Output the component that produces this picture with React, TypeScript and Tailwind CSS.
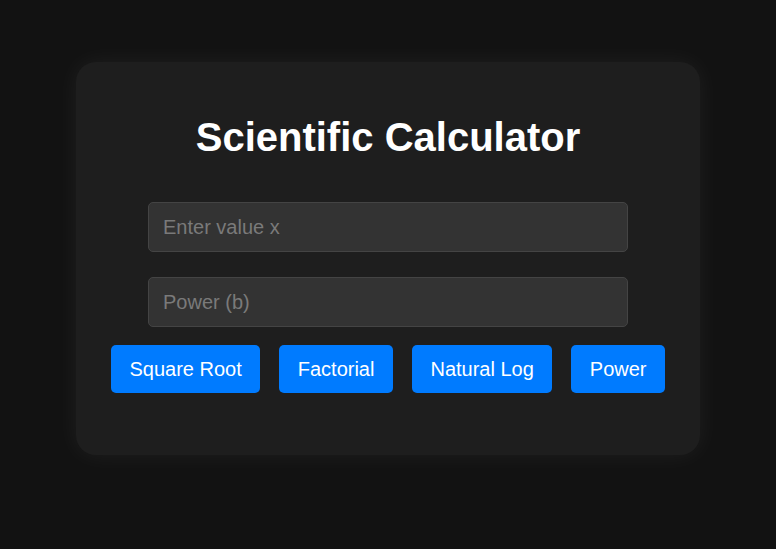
export default function App() {
  const ops = ['Square Root', 'Factorial', 'Natural Log', 'Power']

  return (
    <div className="min-h-[549px] bg-[#121212] flex justify-center pt-[62px] font-['Liberation_Sans',Arial,sans-serif]">
      <div className="w-[624px] h-[393px] bg-[#1e1e1e] rounded-[20px] shadow-[0_0_24px_rgba(255,255,255,0.06)] flex flex-col items-center pt-[52px]">
        <h1 className="text-[40px] leading-[46px] font-bold text-white">Scientific Calculator</h1>
        <input
          type="text"
          placeholder="Enter value x"
          className="mt-[42px] w-[480px] h-[50px] px-[14px] bg-[#333333] border border-[#444444] rounded-[5px] text-[20px] text-white placeholder:text-[#7a7a7a] outline-none"
        />
        <input
          type="text"
          placeholder="Power (b)"
          className="mt-[25px] w-[480px] h-[50px] px-[14px] bg-[#333333] border border-[#444444] rounded-[5px] text-[20px] text-white placeholder:text-[#7a7a7a] outline-none"
        />
        <div className="mt-[18px] flex gap-[19px]">
          {ops.map((op) => (
            <button
              key={op}
              className="h-[48px] px-[18.5px] bg-[#007bff] text-white text-[20px] rounded-[5px]"
            >
              {op}
            </button>
          ))}
        </div>
      </div>
    </div>
  )
}
